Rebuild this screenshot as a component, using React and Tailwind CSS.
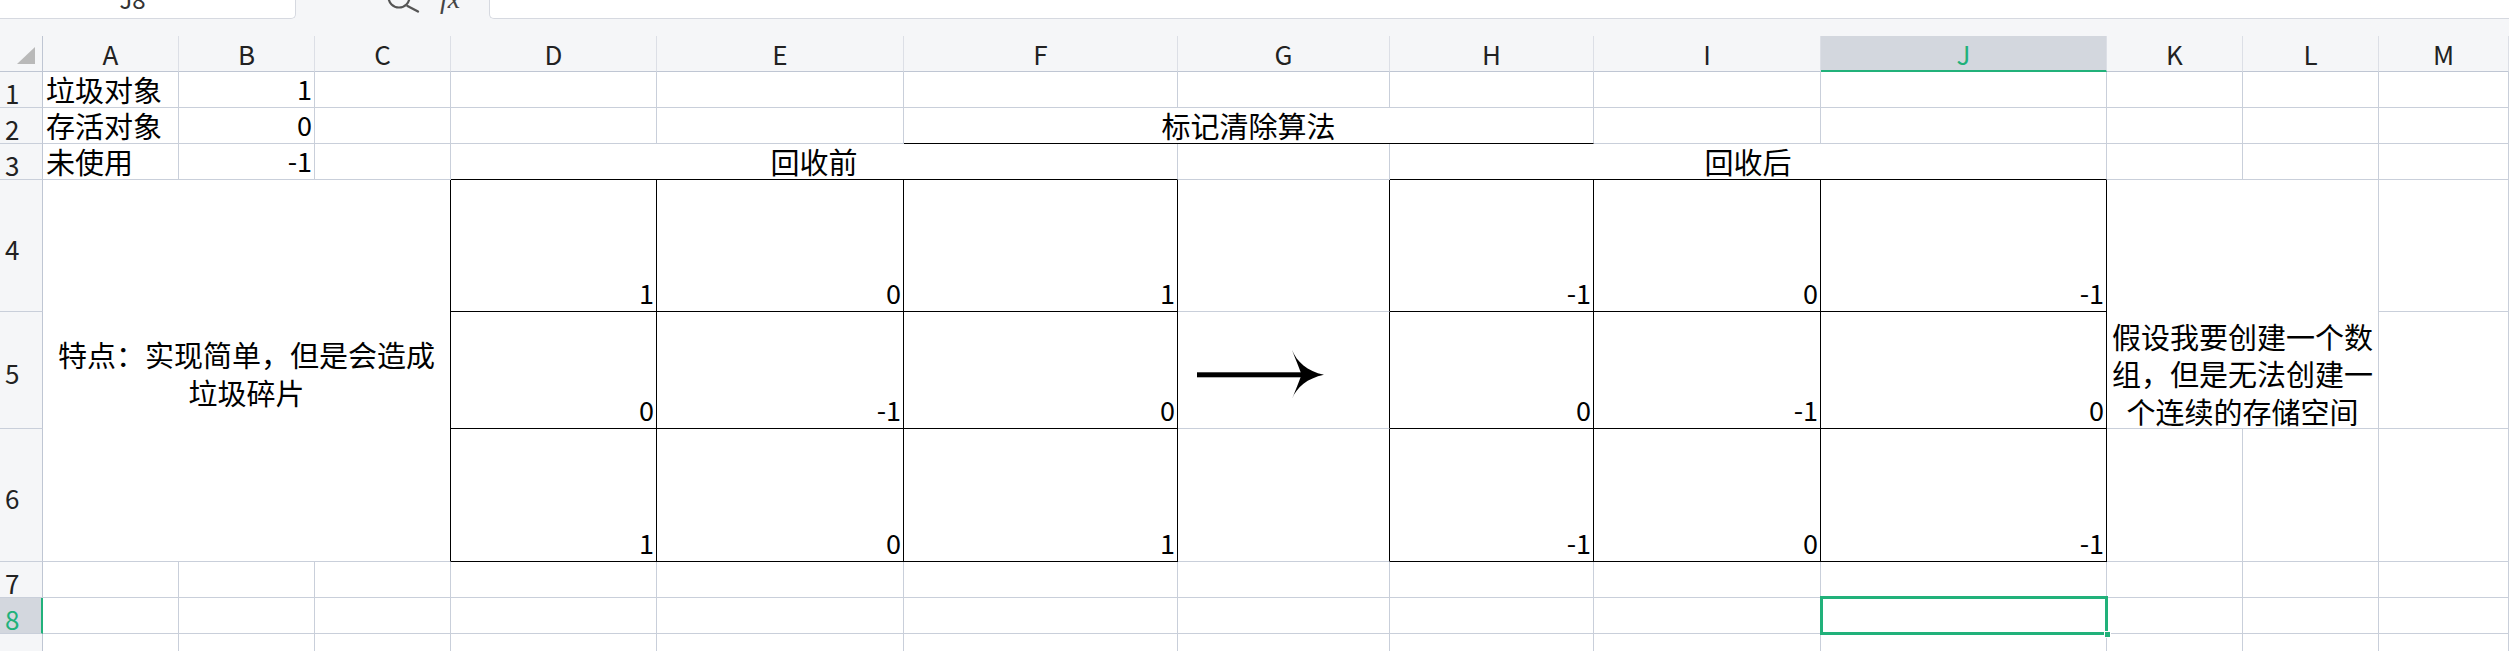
import React from 'react';

function Cell({ span = '', r = false, b = false, className = '', children }) {
  return (
    <div
      className={`${span} border-r border-b ${r ? 'border-r-black' : 'border-r-[#c9cfda]'} ${
        b ? 'border-b-black' : 'border-b-[#c9cfda]'
      } ${className}`}
    >
      {children}
    </div>
  );
}

const TXT = 'flex items-end pl-[3px] text-[29px] leading-[36px] whitespace-nowrap text-black';
const NUM = 'flex items-end justify-end pr-[2px] text-[27px] leading-[36px] whitespace-nowrap text-black';

function RowNum({ n, active = false }) {
  return (
    <div
      className={`flex items-center pl-[5px] pt-[5px] text-[26px] border-b border-b-[#c9cfda] ${
        active
          ? 'bg-[#d3d7de] text-[#21b17a] border-r-2 border-r-[#21b17a]'
          : 'bg-[#f5f6f8] text-[#222] border-r border-r-[#bfc6d3]'
      }`}
    >
      {n}
    </div>
  );
}

function ColHead({ l, active = false }) {
  return (
    <div
      className={`text-center text-[26px] leading-[36px] border-r border-r-[#dcdfe6] ${
        active
          ? 'bg-[#d3d7de] text-[#21b17a] border-b-2 border-b-[#21b17a]'
          : 'bg-[#f5f6f8] text-[#222] border-b border-b-[#bfc6d3]'
      }`}
    >
      {l}
    </div>
  );
}

function Arrow() {
  return (
    <svg width="132" height="52" viewBox="0 0 132 52" className="mt-[37px] ml-[17px]">
      <rect x="2" y="23.3" width="108" height="5" fill="#000" />
      <path
        d="M97 1 C102 13 112 22 129 25.8 C112 29.5 102 38 97 50 C100.5 41 104 33 106.5 25.8 C104 18.5 100.5 10 97 1 Z"
        fill="#000"
      />
    </svg>
  );
}

const LETTERS = ['A', 'B', 'C', 'D', 'E', 'F', 'G', 'H', 'I', 'J', 'K', 'L', 'M'];

export default function App() {
  return (
    <div className="w-[2509px] h-[651px] overflow-hidden bg-white font-['Noto_Sans_CJK_SC','Noto_Sans',sans-serif]">
      {/* top formula bar strip */}
      <div className="h-[36px] bg-[#f5f6f8]">
        <div className="h-[19px] flex">
          <div className="w-[296px] h-full bg-white border-r border-b border-[#d6d9e0] rounded-br-[5px] overflow-hidden flex justify-center">
            <span className="text-[24px] leading-[24px] mt-[-13px] ml-[-30px] text-[#333]">J8</span>
          </div>
          <div className="w-[193px] h-full overflow-hidden flex items-start">
            <svg width="40" height="19" viewBox="0 0 40 19" className="ml-[89px] shrink-0">
              <circle cx="14" cy="-3" r="10.5" fill="none" stroke="#555" strokeWidth="2.2" />
              <line x1="22.5" y1="6" x2="33" y2="11.5" stroke="#555" strokeWidth="2.4" strokeLinecap="round" />
            </svg>
            <span className="ml-[15px] mt-[-15px] text-[28px] leading-[28px] italic font-['Liberation_Serif',serif] text-[#444]">
              fx
            </span>
          </div>
          <div className="flex-1 h-full bg-white border-l border-b border-[#d6d9e0] rounded-bl-[5px]"></div>
        </div>
      </div>

      {/* sheet grid */}
      <div className="grid grid-cols-[43px_136px_136px_136px_206px_247px_274px_212px_204px_227px_286px_136px_136px_130px] grid-rows-[36px_36px_36px_36px_132px_117px_133px_36px_36px_36px]">
        {/* header row */}
        <div className="bg-[#f5f6f8] border-r border-b border-[#bfc6d3]">
          <svg width="42" height="35" viewBox="0 0 42 35">
            <polygon points="35,11 35,28 17,28" fill="#b9b9b9" />
          </svg>
        </div>
        {LETTERS.map((l) => (
          <ColHead key={l} l={l} active={l === 'J'} />
        ))}

        {/* row 1 */}
        <RowNum n="1" />
        <Cell className={TXT}>垃圾对象</Cell>
        <Cell className={NUM}>1</Cell>
        <Cell />
        <Cell />
        <Cell />
        <Cell />
        <Cell />
        <Cell />
        <Cell />
        <Cell />
        <Cell />
        <Cell />
        <Cell />

        {/* row 2 */}
        <RowNum n="2" />
        <Cell className={TXT}>存活对象</Cell>
        <Cell className={NUM}>0</Cell>
        <Cell />
        <Cell />
        <Cell />
        <Cell span="col-span-3" b className="flex items-end justify-center text-[29px] leading-[36px] text-black">
          标记清除算法
        </Cell>
        <Cell />
        <Cell />
        <Cell />
        <Cell />
        <Cell />

        {/* row 3 */}
        <RowNum n="3" />
        <Cell className={TXT}>未使用</Cell>
        <Cell className={NUM}>-1</Cell>
        <Cell />
        <Cell span="col-span-3" b className="flex items-end justify-center text-[29px] leading-[36px] text-black">
          回收前
        </Cell>
        <Cell />
        <Cell span="col-span-3" b className="flex items-end justify-center text-[29px] leading-[36px] text-black">
          回收后
        </Cell>
        <Cell />
        <Cell />
        <Cell />

        {/* row 4 */}
        <RowNum n="4" />
        <Cell
          span="col-span-3 row-span-3"
          r
          className="flex items-center justify-center pt-[4px] text-[29px] leading-[38px] text-black text-center"
        >
          <div>
            <div>特点：实现简单，但是会造成</div>
            <div>垃圾碎片</div>
          </div>
        </Cell>
        <Cell r b className={NUM}>1</Cell>
        <Cell r b className={NUM}>0</Cell>
        <Cell r b className={NUM}>1</Cell>
        <Cell r />
        <Cell r b className={NUM}>-1</Cell>
        <Cell r b className={NUM}>0</Cell>
        <Cell r b className={NUM}>-1</Cell>
        <Cell
          span="col-span-2 row-span-2"
          className="flex flex-col justify-end items-center text-[29px] leading-[37.5px] text-black text-center"
        >
          <div className="mb-[-2px]">
            <div>假设我要创建一个数</div>
            <div>组，但是无法创建一</div>
            <div>个连续的存储空间</div>
          </div>
        </Cell>
        <Cell />

        {/* row 5 */}
        <RowNum n="5" />
        <Cell r b className={NUM}>0</Cell>
        <Cell r b className={NUM}>-1</Cell>
        <Cell r b className={NUM}>0</Cell>
        <Cell r className="flex items-start">
          <Arrow />
        </Cell>
        <Cell r b className={NUM}>0</Cell>
        <Cell r b className={NUM}>-1</Cell>
        <Cell r b className={NUM}>0</Cell>
        <Cell />

        {/* row 6 */}
        <RowNum n="6" />
        <Cell r b className={NUM}>1</Cell>
        <Cell r b className={NUM}>0</Cell>
        <Cell r b className={NUM}>1</Cell>
        <Cell r />
        <Cell r b className={NUM}>-1</Cell>
        <Cell r b className={NUM}>0</Cell>
        <Cell r b className={NUM}>-1</Cell>
        <Cell />
        <Cell />
        <Cell />

        {/* row 7 */}
        <RowNum n="7" />
        {LETTERS.map((l) => (
          <Cell key={'r7' + l} />
        ))}

        {/* row 8 */}
        <RowNum n="8" active />
        {LETTERS.map((l) =>
          l === 'J' ? (
            <Cell key={'r8' + l} className="relative">
              <div className="absolute left-[-1px] right-[-2px] top-[-2px] bottom-[-2px] border-[3px] border-[#21b17a]"></div>
              <div className="absolute right-[-5px] bottom-[-5px] w-[7px] h-[7px] bg-[#21b17a] border border-white"></div>
            </Cell>
          ) : (
            <Cell key={'r8' + l} />
          )
        )}

        {/* row 9 */}
        <RowNum n="" />
        {LETTERS.map((l) => (
          <Cell key={'r9' + l} />
        ))}
      </div>
    </div>
  );
}
